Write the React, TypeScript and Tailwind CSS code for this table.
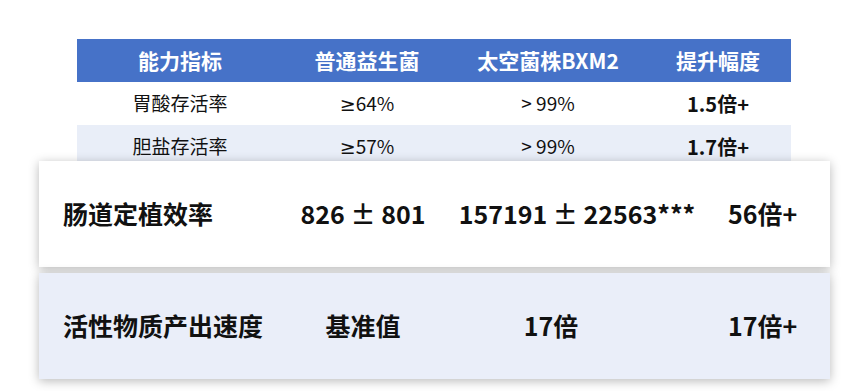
import React from 'react';

const font = { fontFamily: '"Noto Sans CJK SC", "Noto Sans", sans-serif' };

const headers = ['能力指标', '普通益生菌', '太空菌株BXM2', '提升幅度'];

// ≥ in the CJK font comes out slanted, so render it with a Latin font
const Ge = () => <span style={{ fontFamily: '"Noto Sans", "DejaVu Sans", sans-serif' }}>≥</span>;

const rows = [
  { name: '胃酸存活率', base: '64%', bxm: '> 99%', up: '1.5倍+', bg: 'bg-white' },
  { name: '胆盐存活率', base: '57%', bxm: '> 99%', up: '1.7倍+', bg: 'bg-[#e9eef8]' },
];

const App: React.FC = () => {
  return (
    <div className="w-[864px] h-[391px] bg-white overflow-hidden pt-[39px]" style={font}>
      {/* Top table */}
      <div className="ml-[77px] w-[714px]">
        <div className="grid grid-cols-[206px_168px_194px_146px] h-[43px] bg-[#4672c8] text-white text-[21px] font-bold items-center text-center">
          {headers.map((h) => (
            <div key={h}>{h}</div>
          ))}
        </div>
        {rows.map((r) => (
          <div
            key={r.name}
            className={`grid grid-cols-[206px_168px_194px_146px] h-[43px] ${r.bg} text-[#111] items-center text-center`}
          >
            <div className="text-[19px]">{r.name}</div>
            <div className="text-[19px]">
              <Ge />
              {r.base}
            </div>
            <div className="text-[19px]">{r.bxm}</div>
            <div className="text-[20px] font-bold">{r.up}</div>
          </div>
        ))}
      </div>

      {/* Highlighted rows */}
      <div className="relative z-10 -mt-[7px] ml-[39px] w-[791px] flex flex-col gap-[6px]">
        <div className="h-[106px] bg-white shadow-[0_2px_10px_rgba(0,0,0,0.28)] flex items-center pl-[24px] text-[25px] font-bold text-[#111]">
          <div className="w-[237px]">肠道定植效率</div>
          <div className="w-[126px] text-center whitespace-nowrap">826 ± 801</div>
          <div className="w-[302px] text-center whitespace-nowrap">157191 ± 22563***</div>
          <div>56倍+</div>
        </div>
        <div className="h-[106px] bg-[#eaeef9] shadow-[0_2px_10px_rgba(0,0,0,0.28)] flex items-center pl-[24px] text-[25px] font-bold text-[#111]">
          <div className="w-[237px]">活性物质产出速度</div>
          <div className="w-[126px] text-center">基准值</div>
          <div className="w-[302px] text-center pr-[52px]">17倍</div>
          <div>17倍+</div>
        </div>
      </div>
    </div>
  );
};

export default App;
